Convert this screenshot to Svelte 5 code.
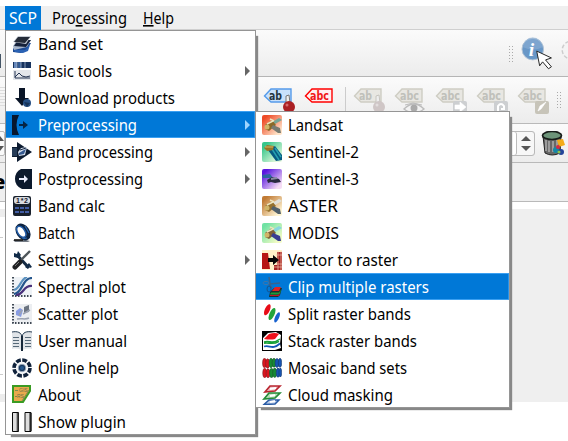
<script>
  const icons = {
    bandset: `<path d="M1 15 5 9h14l-4 7-6 3-8-1z" fill="#1d4a92"/><path d="M1 12 5 6h14l-4 7-13 3z" fill="#a8b6ca"/><path d="M2 12 6 6h13l-5 7z" fill="#15213a"/><path d="M1 8 6 2h13l-5 8z" fill="#c6ccd4"/><path d="M2 8 6 3h12l-5 6z" fill="#242b38"/><path d="m2 16 11 0 5-5-2 6-5 2-8-1z" fill="#2a62b4"/>`,
    basic: `<path d="M1 1h18v6H1z" fill="#17335f"/><path d="M2 1h3v6H2z" fill="#6789bb"/><path d="M6 1h3v6H6z" fill="#345b93"/><path d="M5 1v6M9 1v6M13 1v6" stroke="#b5c4dc" stroke-width=".7"/><path d="M1 9h18v10H1z" fill="#e3e6eb"/><path d="M3 10v7h15M3 16l4-4 3 3 4 1 4-1" fill="none" stroke="#243452"/>`,
    download: `<path d="M7 0h6v10h4l-7 8-7-8h4z" fill="#091426"/><circle cx="15" cy="15" r="4" fill="#264f84"/><path d="m12 14 6 1-3 4z" fill="#163358"/>`,
    pre: `<path d="M0 0h7Q2 10 7 20H0z" fill="#07172e"/><path d="M7 9h4V6l5 4-5 4v-3H7z" fill="#062544"/>`,
    process: `<path d="M0 5h5V0l15 10L5 20v-5H0z" fill="#0c1b30"/><path d="M0 6h5v8H0z" fill="#263c57"/><path d="m6 10 3-4 6-1-2 8-6 1z" fill="#d5dfed"/><path d="m7 11 5-3 2-1-2 5-5 1z" fill="#365a91"/><path d="m8 8 6-2" stroke="#15253e"/>`,
    post: `<path d="M20 0H9Q3 3 3 10t7 10h10z" fill="#0b192d"/><path d="M7 9h5V6l4 4-4 4v-3H7z" fill="#e7eafa"/>`,
    calc: `<rect x="1" width="18" height="20" rx="2" fill="#18202c"/><rect x="2" y="1" width="16" height="7" rx="3" fill="#d9dce0"/><text x="4" y="7.2" font-size="7" font-weight="bold" textLength="12" fill="#18202c">1*2</text><path d="M3 11h4v2H3zm5 0h4v2H8zm5 0h4v2h-4zM3 15h4v2H3zm5 0h4v2H8zm5 0h4v2h-4z" fill="#425da5"/>`,
    batch: `<path d="M1 17h13l4 1-2 1H3z" fill="#747b84"/><ellipse cx="11" cy="9" rx="4.4" ry="7" transform="rotate(-35 11 9)" fill="none" stroke="#0d2340" stroke-width="4.4"/><ellipse cx="9.3" cy="8.8" rx="3.6" ry="6.3" transform="rotate(-35 9.3 8.8)" fill="#fff" stroke="#215ba6" stroke-width="1.5"/><path d="m13 3 4 7M10 16l5-1" stroke="#2764af" stroke-width="1.2"/><path d="m2 17 9 0" stroke="#111" stroke-width="1.6"/>`,
    settings: `<path d="m5 5 12 13" stroke="#152b43" stroke-width="3"/><path d="m2 3 3 1 1-3 3 4-3 3-4-1zm15 10 3 4-2 1-1-2-2 1 1 2-3-2z" fill="#102b48"/><path d="M18 1 9 10" stroke="#4e5559" stroke-width="2.4"/><path d="m8 12-5 5" stroke="#202123" stroke-width="5" stroke-linecap="round"/><path d="m7 12-4 4" stroke="#777"/>`,
    spectral: `<path fill="#eef2f6" d="M0 0h20v20H0z"/><path d="M1 0v19h19" fill="none" stroke="#071321" stroke-dasharray="1.5 1.5" stroke-width="1.5"/><path d="M2 17C11 16 10 1 20 1" fill="none" stroke="#24558c" stroke-width="2.2"/><path d="M2 13C9 11 8 2 15 0" fill="none" stroke="#5b91bf" stroke-width="2.2"/><path d="M4 18c8 0 7-10 16-9" fill="none" stroke="#49317b" stroke-width="2.2"/>`,
    scatter: `<path d="M0 0h20v20H0z" fill="#eceef1"/><path d="M1 0v19h19" fill="none" stroke="#071321" stroke-dasharray="1.5 1.5" stroke-width="1.5"/><path d="m4 7 4-3 3 2-2 7-5-2z" fill="#889ce3"/><path d="m12 3 5-2v7l-5 1z" fill="#6b7480"/><path d="M5 15c5-1 8 1 12-1M11 10l7-4M7 11l3-5" stroke="#9ba2b1" stroke-width="1.5" fill="none"/>`,
    manual: `<path d="M0 1c5-1 9 0 10 4 1-4 5-5 10-4v17c-5-1-9 0-10 2-1-2-5-3-10-2z" fill="#e0e4e8"/><path d="M0 1c5-1 10 0 10 6v13M20 1c-5-1-10 0-10 6" fill="none" stroke="#20374e"/><path d="M1 6.5h6M1 9.5h6M1 12.5h6M1 15.5h6M13 6.5h6M13 9.5h6M13 12.5h6M13 15.5h6" stroke="#566978"/><path d="M10 5v15" stroke="#17283a" stroke-width="2"/>`,
    help: `<circle cx="10" cy="10" r="8" fill="#f5f7fa" stroke="#10223b" stroke-width="3.6" stroke-dasharray="4.8 1.483"/><circle cx="10" cy="10" r="3.8" fill="#14365e" stroke="#a7b5c5" stroke-width=".8"/><circle cx="10" cy="10" r="2" fill="#24578d"/>`,
    about: `<path d="M1 1h17v5l-7 11H1z" fill="#e9a94c" stroke="#3a9b23" stroke-width="2"/><path d="M3 5.5h3M3 11.5h2M10 16l7-11" stroke="#7e8b4e"/><text x="7" y="7" font-size="5" fill="#667247">GIS</text><text x="5" y="13" font-size="5" fill="#667247">RS</text>`,
    show: `<path d="M.5.5h6v19h-6zM13 .5h6v19h-6z" fill="#ddd" stroke="#080808"/><path d="M6 1v18M18.5 1v18" stroke="#222" stroke-width="2"/><path d="M5 1v18M17.5 1v18" stroke="#777"/>`,
    vector: `<path d="M0 0h20v20H0z" fill="#fff1c9"/><path d="M0 3h6l2 16H0z" fill="#b71716"/><path d="M15 2h5v18h-8v-5h3z" fill="#a62123"/><path d="M12 17h8M14 5h6M14 14h6M16 1v19M19 1v19" stroke="#f3c6ad" stroke-width=".7"/><path d="M6 8h5V5l6 5-6 5v-3H6z" fill="#060606"/>`,
    clip: `<path d="M7 0 8 7l10-1M7 7l3 4" fill="none" stroke="#37628d" stroke-width="1.6"/><ellipse cx="4" cy="6" rx="3" ry="1.6" fill="none" stroke="#3d75aa"/><ellipse cx="7" cy="12" rx="2" ry="3" fill="none" stroke="#15558f"/><path d="m8 15 4-4h8l-2 7-2 2H7z" fill="#1b302d"/><path d="m10 14 3-4h6l-2 4z" fill="#e02324"/><path d="m9 15.5 8 0 2-3-1 4-2 1H8z" fill="#1c9d38"/><path d="m8 18 8 0 2-2-1 3H8z" fill="#bc172a"/>`,
    split: `<g transform="rotate(24 10 10)"><ellipse cx="4" cy="8" rx="2.5" ry="6" fill="#e80c17"/><ellipse cx="10" cy="10" rx="2.5" ry="6.5" fill="#22a43b"/><ellipse cx="16" cy="11" rx="2" ry="5.5" fill="#1761cf"/></g>`,
    stack: `<path d="M0 0h20v20H0z"/><path d="M1 7 6 2l8-1 5 3-1 9 1 4-6 2H1z" fill="#fff"/><path d="m2 8 5-5q6-2 10 0l-4 5q-4 1-11 0z" fill="#ef111b"/><path d="M2 11c6-2 8 3 16-3M2 12.3c5-1 9 2 15-2" fill="none" stroke="#159f37" stroke-width="1.4"/><path d="M2 15.5c6-2 8 4 16-3" fill="none" stroke="#1557b6" stroke-width="1.8"/>`,
    mosaic: `<g fill="#dc151d" stroke="#65202b" stroke-width=".5"><ellipse cx="2.5" cy="5" rx="2" ry="4.7"/><ellipse cx="5.6" cy="5.5" rx="2" ry="4.7"/><ellipse cx="2.7" cy="15" rx="2" ry="4.7"/><ellipse cx="6" cy="15.3" rx="2" ry="4.5"/></g><g fill="#188b33" stroke="#204831" stroke-width=".5"><ellipse cx="9" cy="5" rx="2" ry="4.7"/><ellipse cx="12" cy="4.7" rx="2" ry="4.5"/><ellipse cx="9.5" cy="15" rx="2" ry="4.7"/><ellipse cx="12.7" cy="14.8" rx="2" ry="4.7"/></g><g fill="#1754b2" stroke="#19345a" stroke-width=".5"><ellipse cx="15" cy="5" rx="2" ry="4.6"/><ellipse cx="18" cy="4.8" rx="1.7" ry="4.6"/><ellipse cx="16" cy="14.7" rx="1.8" ry="4.6"/><ellipse cx="18.3" cy="14.5" rx="1.4" ry="4.5"/></g>`,
    cloud: `<path d="m8 1 10 0-5 5-10 1z" fill="#f1bdc4" stroke="#b92731" stroke-width="1.7"/><path d="m7 8 11 0-5 5-11 1z" fill="#b9deb9" stroke="#258b38" stroke-width="1.7"/><path d="m7 15 10 0-4 4-11 .5z" fill="#becfeb" stroke="#285ba5" stroke-width="1.5"/><path d="m8 4 6-1M8 11l5-1M8 17l5-1" stroke="#fff" stroke-width="2"/>`
  };
  const main = [
    ['bandset', 'Band set', 65], ['basic', 'Basic tools', 74, true], ['download', 'Download products', 137],
    ['pre', 'Preprocessing', 99, true], ['process', 'Band processing', 115, true], ['post', 'Postprocessing', 105, true],
    ['calc', 'Band calc', 67], ['batch', 'Batch', 37], ['settings', 'Settings', 56, true],
    ['spectral', 'Spectral plot', 88], ['scatter', 'Scatter plot', 80], ['manual', 'User manual', 89],
    ['help', 'Online help', 81], ['about', 'About', 43], ['show', 'Show plugin', 88]
  ];
  const sub = [
    ['landsat', 'Landsat', 55], ['s2', 'Sentinel-2', 71], ['s3', 'Sentinel-3', 71], ['aster', 'ASTER', 50],
    ['modis', 'MODIS', 51], ['vector', 'Vector to raster', 110], ['clip', 'Clip multiple rasters', 141],
    ['split', 'Split raster bands', 123], ['stack', 'Stack raster bands', 129],
    ['mosaic', 'Mosaic band sets', 119], ['cloud', 'Cloud masking', 105]
  ];
  const sats = {
    landsat: ['#ee4b27', '#ffe3c8', '#78a695', '#8b6927', '#777b72'],
    s2: ['#37c68b', '#e3f9dd', '#27a0af', '#997526', '#075a82'],
    s3: ['#5a17df', '#f5dcf5', '#2d66a0', '#484464', '#292a40'],
    aster: ['#c17b35', '#fff5d5', '#e0e0d8', '#94702d', '#51606b'],
    modis: ['#70e2a4', '#f2fbc4', '#87d6df', '#7e6035', '#373d92']
  };
  const labels = ['pin', 'eye', 'move', 'rotate', 'edit'];
</script>

{#snippet icon(name)}
  <svg class="icon" viewBox="0 0 20 20">
    {#if sats[name]}
      {@const c = sats[name]}
      <defs><linearGradient id={name} x1="0" y1="0" x2="1" y2="1"><stop offset=".15" stop-color={c[0]} /><stop offset=".85" stop-color={c[1]} /></linearGradient></defs>
      <rect width="20" height="20" rx="2" fill={`url(#${name})`} />
      {#if name === 's2'}
        <path d="m6 8 7-4 7 9v5l-6 1z" fill={c[4]} /><path d="m10 7 7 11M13 6l6 9" stroke={c[2]} stroke-width="1.5" />
        <path d="m2 6 3-3 7 1-1 4-6 1z" fill={c[3]} /><path d="m3 5 8 0" stroke="#d4b967" />
      {:else if name === 's3'}
        <path d="m0 6 8-1 3 4-10 0z" fill={c[2]} /><path d="m5 11 5-3 7 2 2 3-6 1-4-1-3 1z" fill={c[4]} /><path d="m9 10 6-1" stroke="#888ca0" stroke-width="2" />
      {:else}
        <path d="m10 7 7-4 3 2-7 4z" fill={c[2]} /><path d="m3 10 7-5 4 5-7 6-4-2z" fill={c[3]} />
        <circle cx="5" cy="12" r="2.5" fill="#d0b568" /><path d="m11 10 7 3 1 5-3 0-7-5z" fill={c[4]} /><path d="m5 9 6-3M8 4l4 2" stroke="#ede4bd" stroke-width="1.5" />
      {/if}
    {:else}
      {@html icons[name]}
    {/if}
  </svg>
{/snippet}

{#snippet row(item, selected)}
  <div class="row" class:selected>
    {@render icon(item[0])}
    <svg class="label" width="180" height="27"><text x="0" y="20" textLength={item[2]} lengthAdjust="spacingAndGlyphs">{item[1]}</text></svg>
    {#if item[3]}<i class="arrow"></i>{/if}
  </div>
{/snippet}

{#snippet tag(kind, muted, red)}
  <svg class="tag" viewBox="0 0 34 28">
    <path d="M1.5 9 8 2h20v13H8z" fill={muted ? '#e8e7e2' : red ? '#fff0f0' : '#c9e1fb'} stroke={muted ? '#cecdc3' : red ? '#f00' : '#559bea'} stroke-width="1.4" />
    <text x="6" y="13" textLength={kind === 'pin' ? 13 : 19} lengthAdjust="spacingAndGlyphs" fill={muted ? '#bfc0ba' : red ? '#f01818' : '#26353e'}>{kind === 'pin' ? 'ab' : 'abc'}</text>
    {#if kind === 'pin'}
      <path d="m23 16 0-7 3-1 1 8" fill="#eee" stroke={muted ? '#c6c4be' : '#777'} /><circle cx="26" cy="20" r="6" fill={muted ? '#cfc6c6' : '#ab2024'} /><circle cx="24" cy="18" r="1.5" fill={muted ? '#e3dede' : '#d56a6a'} />
    {:else if kind === 'eye'}
      <path d="M10 22q10-10 20 0-10 8-20 0z" fill="#f2f2f2" stroke="#bcbcbc" stroke-width="1.4" /><circle cx="20" cy="21" r="3.5" fill="#aaa" /><path d="m11 18 8-2 9 2" fill="none" stroke="#bbb" />
    {:else if kind !== 'plain'}
      <rect x="18" y="14" width="14" height="13" rx="2" fill={kind === 'edit' ? '#c7c4b9' : '#cdcfd1'} />
      <path d={kind === 'move' ? 'M20 18h5v-3l6 5-6 5v-3h-5z' : kind === 'rotate' ? 'M22 24v-5q3-4 6 0v3h-3' : 'm21 24 2-5 6-4-5 7z'} fill={kind === 'rotate' ? 'none' : '#fff'} stroke="#fff" stroke-width={kind === 'rotate' ? 2 : .6} />
    {/if}
  </svg>
{/snippet}

<div class="screen">
  <nav>
    <span class="active"><svg width="29" height="23"><text x="0" y="18" textLength="28" lengthAdjust="spacingAndGlyphs">SCP</text></svg></span>
    <span><svg width="76" height="23"><text x="0" y="18" textLength="75" lengthAdjust="spacingAndGlyphs">Pro<tspan text-decoration="underline">c</tspan>essing</text></svg></span>
    <span><svg width="32" height="23"><text x="0" y="18" textLength="31" lengthAdjust="spacingAndGlyphs"><tspan text-decoration="underline">H</tspan>elp</text></svg></span>
  </nav>
  <div class="toolbar first">
    <i class="chip"></i><i class="grip"></i>
    <svg class="info" viewBox="0 0 48 36"><circle cx="12" cy="12" r="11" fill="#6897c7" stroke="#b4c4d5" /><path d="M2 10a10 10 0 0 1 20 0q-9 5-20 0" fill="#91b4d7" opacity=".5" /><text x="8" y="19" fill="#fff">i</text><path d="m16 14 15 7-6 2 6 7-3 2-6-7-3 4z" fill="#fff" stroke="#242424" /><circle cx="51" cy="13" r="9" fill="#f4f4f4" stroke="#ccc" stroke-width="1.5" stroke-dasharray="4 2" /></svg>
  </div>
  <div class="toolbar second">
    <i class="left-lines"></i>
    <div class="tags live">{@render tag('pin', false, false)}{@render tag('plain', false, true)}</div>
    <i class="separator"></i>
    <div class="tags disabled">{#each labels as kind}{@render tag(kind, true, false)}{/each}</div>
    <i class="grip last"></i>
  </div>
  <div class="toolbar third">
    <svg class="mini-spin" viewBox="0 0 5 25"><path d="M0 .5h3q1.500 0 1.500 2v20q0 2-1.500 2H0" fill="#fafafa" stroke="#b9b9b9" /><path d="M0 5v5h4zM0 20v-5h4z" fill="#555" /></svg>
    <div class="spin"><b></b><i></i></div>
    <svg class="trash" viewBox="0 0 24 25"><path d="m2 5 2 17q7 4 15 0l1-17z" fill="#686868" stroke="#222" /><path d="M5 9v11M8 10v11M12 10v11M16 9v10" stroke="#b3b3b3" stroke-width="1.4" /><ellipse cx="11" cy="4.5" rx="9.5" ry="4" fill="#6d9479" stroke="#181d1a" stroke-width="1.7" /><path d="m16 9 6-1 2 6-6 2z" fill="#f4ac18" /><circle cx="15" cy="19" r="3" fill="#1687a6" /><circle cx="20" cy="21" r="3" fill="#234499" /><circle cx="17" cy="16" r="2" fill="#d52b42" /><circle cx="18" cy="21" r="1.5" fill="#91c44c" /></svg>
  </div>
  <div class="heading"><b>e</b></div>
  <div class="canvas"><i class="edge"></i><div></div></div>

  <section class="menu primary">{#each main as item, i}{@render row(item, i === 3)}{/each}</section>
  <section class="menu submenu">{#each sub as item, i}{@render row(item, i === 6)}{/each}</section>
</div>

<style>
  :global(body) { margin: 0; overflow: hidden; }
  .screen { position: relative; width: 568px; height: 441px; padding-top: 6px; overflow: hidden; box-sizing: border-box; background: #fff; font: 16px "Noto Sans", sans-serif; color: #000; }
  nav { height: 23px; display: flex; gap: 15px; padding-left: 5px; background: #efefef; }
  nav span { height: 23px; }
  nav svg { display: block; overflow: visible; }
  nav .active { width: 32px; padding-left: 4px; margin-right: -4px; background: #0078d7; fill: #fff; height: 24px; }
  .toolbar { box-sizing: border-box; display: flex; background: linear-gradient(#fbfbfb, #ececec); }
  .first { height: 48px; border-top: 1px solid #cfcfcf; border-bottom: 1px solid #b5b5b5; padding-top: 7px; }
  .chip { width: 1px; height: 14px; margin-top: 17px; background: #456; }
  .grip { width: 5px; height: 17px; margin: 8px 0 0 507px; background: radial-gradient(circle, #aaa .7px, transparent .8px) 0 0 / 3px 3px; }
  .info { width: 48px; height: 36px; margin-left: 8px; }
  .info text { font: italic bold 20px "Liberation Serif", serif; }
  .second { height: 47px; border-bottom: 1px solid #b9b9b9; padding-top: 10px; }
  .left-lines { width: 5px; height: 20px; background: repeating-linear-gradient(#ddd 0 1px, transparent 1px 3px); }
  .tags { display: flex; gap: 7px; }
  .live { margin-left: 258px; }
  .tag { width: 34px; height: 28px; flex: none; }
  .tag text { font: bold 12px "DejaVu Sans", sans-serif; }
  .separator { width: 1px; height: 30px; margin-left: 7px; background: #ccc; }
  .disabled { margin-left: 7px; }
  .last { margin: 4px 0 0 5px; height: 18px; flex: none; }
  .third { height: 39px; border-bottom: 1px solid #b9b9b9; padding-top: 7px; }
  .mini-spin { width: 5px; height: 25px; }
  .spin { width: 30px; height: 25px; margin-left: 500px; box-sizing: border-box; border: 1px solid #b9b9b9; border-radius: 3px; background: #fff; display: flex; flex-direction: column; align-items: flex-end; padding: 4px 3px; gap: 5px; box-shadow: inset -17px 0 #f7f7f7, inset -18px 0 #bbb; }
  .spin b, .spin i { border: 5px solid transparent; }
  .spin b { border-top: 0; border-bottom-color: #555; }
  .spin i { border-bottom: 0; border-top-color: #555; }
  .trash { width: 24px; height: 25px; margin-left: 6px; }
  .heading { height: 39px; box-sizing: border-box; border-bottom: 1px solid #b9b9b9; background: #efefef; font: bold 20px/38px "Noto Sans", sans-serif; }
  .heading b { display: block; margin-left: -7px; }
  .canvas { padding-top: 7px; height: 193px; display: flex; justify-content: space-between; }
  .canvas div { width: 59px; background: #efefef; }
  .edge { width: 5px; background: linear-gradient(#ededed, #ededed) 0 0 / 5px 8px no-repeat, linear-gradient(#ccc, #ccc) 0 28px / 3px 1px no-repeat, linear-gradient(#ccc, #ccc) 0 165px / 3px 1px no-repeat, linear-gradient(#ededed, #ededed) 0 185px / 5px 8px no-repeat; }
  .menu { position: absolute; box-sizing: border-box; border: 1px solid #959595; background: #fff; box-shadow: 4px 4px 1px -2px #888; }
  .primary { left: 5px; top: 30px; width: 251px; height: 405px; }
  .submenu { left: 255px; top: 111px; width: 255px; height: 297px; }
  .row { height: 27px; display: flex; align-items: center; padding-left: 6px; box-sizing: border-box; }
  .row:first-child { margin-top: -1px; }
  .submenu .row:first-child, .primary .row:first-child { position: relative; z-index: 0; }
  .row.selected { background: #0078d7; box-shadow: inset 0 1px #3ba0f2, inset 0 -1px #3ba0f2, inset -1px 0 #2894ec; }
  .icon { width: 20px; height: 20px; flex: none; margin-top: 1px; }
  .icon :global(text) { font-family: "Liberation Sans", sans-serif; }
  .label { margin-left: 6px; flex: none; overflow: visible; fill: #000; }
  .selected .label { fill: #fff; }
  .arrow { border: 5px solid transparent; border-left-color: #666; border-right: 0; margin: 1px 0 0 27px; flex: none; }
  .selected .arrow { border-left-color: #9dd4ff; }
</style>
